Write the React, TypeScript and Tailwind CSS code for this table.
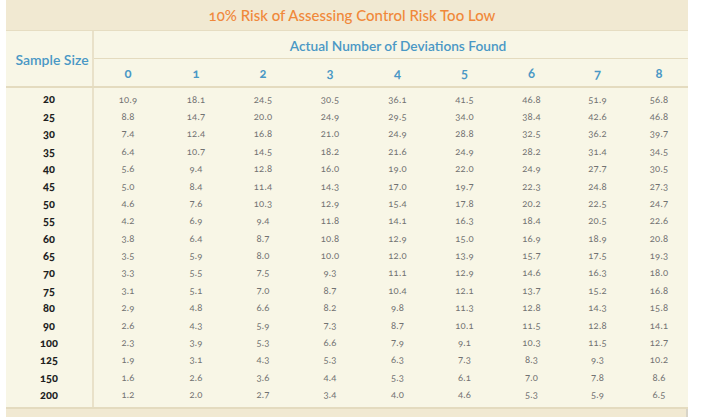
import React from "react";

const cols = ["0", "1", "2", "3", "4", "5", "6", "7", "8"];

const rows: [string, string[]][] = [
  ["20", ["10.9", "18.1", "24.5", "30.5", "36.1", "41.5", "46.8", "51.9", "56.8"]],
  ["25", ["8.8", "14.7", "20.0", "24.9", "29.5", "34.0", "38.4", "42.6", "46.8"]],
  ["30", ["7.4", "12.4", "16.8", "21.0", "24.9", "28.8", "32.5", "36.2", "39.7"]],
  ["35", ["6.4", "10.7", "14.5", "18.2", "21.6", "24.9", "28.2", "31.4", "34.5"]],
  ["40", ["5.6", "9.4", "12.8", "16.0", "19.0", "22.0", "24.9", "27.7", "30.5"]],
  ["45", ["5.0", "8.4", "11.4", "14.3", "17.0", "19.7", "22.3", "24.8", "27.3"]],
  ["50", ["4.6", "7.6", "10.3", "12.9", "15.4", "17.8", "20.2", "22.5", "24.7"]],
  ["55", ["4.2", "6.9", "9.4", "11.8", "14.1", "16.3", "18.4", "20.5", "22.6"]],
  ["60", ["3.8", "6.4", "8.7", "10.8", "12.9", "15.0", "16.9", "18.9", "20.8"]],
  ["65", ["3.5", "5.9", "8.0", "10.0", "12.0", "13.9", "15.7", "17.5", "19.3"]],
  ["70", ["3.3", "5.5", "7.5", "9.3", "11.1", "12.9", "14.6", "16.3", "18.0"]],
  ["75", ["3.1", "5.1", "7.0", "8.7", "10.4", "12.1", "13.7", "15.2", "16.8"]],
  ["80", ["2.9", "4.8", "6.6", "8.2", "9.8", "11.3", "12.8", "14.3", "15.8"]],
  ["90", ["2.6", "4.3", "5.9", "7.3", "8.7", "10.1", "11.5", "12.8", "14.1"]],
  ["100", ["2.3", "3.9", "5.3", "6.6", "7.9", "9.1", "10.3", "11.5", "12.7"]],
  ["125", ["1.9", "3.1", "4.3", "5.3", "6.3", "7.3", "8.3", "9.3", "10.2"]],
  ["150", ["1.6", "2.6", "3.6", "4.4", "5.3", "6.1", "7.0", "7.8", "8.6"]],
  ["200", ["1.2", "2.0", "2.7", "3.4", "4.0", "4.6", "5.3", "5.9", "6.5"]],
];

// column widths read off the picture, after the 88px sample-size column
const grid = "grid grid-cols-[68px_68px_66px_68px_67px_67px_67px_65px_58px]";

export default function App() {
  return (
    <div className="h-[417px] w-[705px] overflow-hidden bg-white pl-[6px] font-['Lato','Noto_Sans',sans-serif] oldstyle-nums">
      <div className="w-[682px] bg-[#f8f6e6]">
        <div className="flex h-[31px] items-center justify-center border-b border-[#e6ddc2] bg-[#f1e9d2] pl-[10px] text-[15px] font-medium text-[#f0883a]">
          10% Risk of Assessing Control Risk Too Low
        </div>

        <div className="flex border-b-2 border-[#e4dbbf]">
          <div className="flex w-[88px] items-center justify-center border-r-2 border-[#e9e1c9] pt-[2px] pl-[6px] text-[14px] font-semibold text-[#4a98c5]">
            Sample Size
          </div>
          <div className="flex-1">
            <div className="flex h-[28px] items-center justify-center border-b border-[#e4dbbf] pt-[4px] pl-[14px] text-[13.7px] font-semibold text-[#4a98c5]">
              Actual Number of Deviations Found
            </div>
            <div className={`${grid} h-[27px] items-center pt-[3px] text-[13px] font-bold text-[#4a98c5]`}>
              {cols.map((c) => (
                <span key={c} className="text-center">{c}</span>
              ))}
            </div>
          </div>
        </div>

        <div className="flex border-b-2 border-[#e4dbbf]">
          <div className="w-[88px] border-r-2 border-[#e9e1c9] py-[3px]">
            {rows.map(([n]) => (
              <div key={n} className="flex h-[17.4px] items-center justify-center text-[11px] font-black text-[#1f1f1f]">
                {n}
              </div>
            ))}
          </div>
          <div className="flex-1 py-[3px]">
            {rows.map(([n, vals]) => (
              <div key={n} className={`${grid} h-[17.4px] items-center text-[9.5px] tracking-[0.2px] text-[#727272]`}>
                {vals.map((v, i) => (
                  <span key={i} className="text-center">{v}</span>
                ))}
              </div>
            ))}
          </div>
        </div>

        <div className="h-[12px] border-r-2 border-[#d8d4c8] bg-[#f1e9d2]" />
      </div>
    </div>
  );
}
